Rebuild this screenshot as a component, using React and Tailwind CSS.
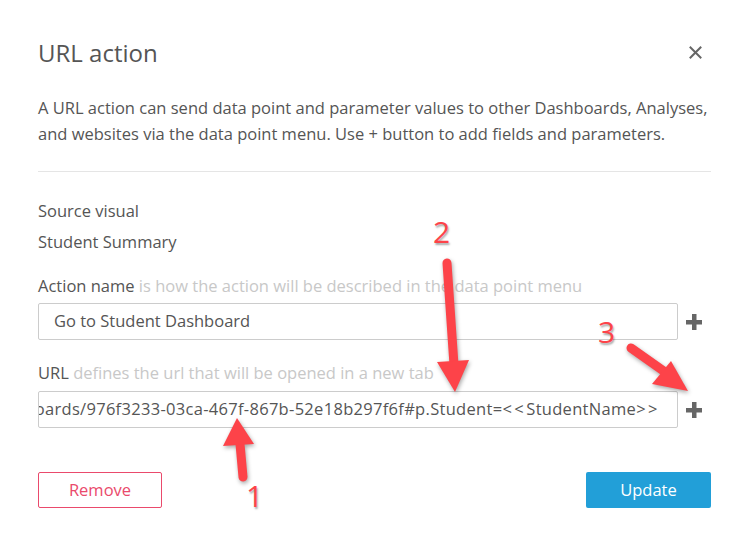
import React from 'react';

const font = { fontFamily: '"Open Sans", "Noto Sans", sans-serif' };

function PlusIcon() {
  return (
    <svg width="18" height="18" viewBox="0 0 18 18" className="shrink-0">
      <rect x="7" y="1" width="4.5" height="16" fill="#666" />
      <rect x="1" y="7" width="16" height="4.5" fill="#666" />
    </svg>
  );
}

function CloseIcon() {
  return (
    <svg width="13" height="13" viewBox="0 0 13 13" className="mr-[9px] mt-[9px] shrink-0">
      <path d="M1.5 1.5 L11.5 11.5 M11.5 1.5 L1.5 11.5" stroke="#666" strokeWidth="2" strokeLinecap="square" />
    </svg>
  );
}

function Annotations() {
  const shadow = { ...font, textShadow: '1px 2px 2px rgba(0,0,0,0.35)' };
  return (
    <div className="pointer-events-none absolute inset-0">
      <svg width="746" height="538" className="absolute left-0 top-0" style={{ filter: 'drop-shadow(1px 2px 2px rgba(0,0,0,0.35))' }}>
        {/* arrow 2 */}
        <line x1="447" y1="263" x2="454" y2="365" stroke="#fd4349" strokeWidth="9" strokeLinecap="round" />
        <polygon points="437,362 469,360 455,392" fill="#fd4349" />
        {/* arrow 3 */}
        <line x1="631" y1="348" x2="665" y2="372" stroke="#fd4349" strokeWidth="9" strokeLinecap="round" />
        <polygon points="671,361 652,384 688,391" fill="#fd4349" />
        {/* arrow 1 */}
        <line x1="243" y1="477" x2="240" y2="444" stroke="#fd4349" strokeWidth="9" strokeLinecap="round" />
        <polygon points="223,446 254,444 237,418" fill="#fd4349" />
      </svg>
      <div className="absolute left-[433px] top-[214px] text-[30px] leading-[36px] text-[#fd4349]" style={shadow}>2</div>
      <div className="absolute left-[598px] top-[314px] text-[30px] leading-[36px] text-[#fd4349]" style={shadow}>3</div>
      <div className="absolute left-[246px] top-[478px] text-[30px] leading-[36px] text-[#fd4349]" style={shadow}>1</div>
    </div>
  );
}

export default function App() {
  return (
    <div className="relative h-[538px] w-[746px] overflow-hidden bg-white text-[#555]" style={font}>
      <div className="flex flex-col pl-[38px] pr-[35px] pt-[37px]">
        <div className="flex items-start justify-between">
          <h2 className="text-[24px] font-normal leading-[32px] text-[#555]">URL action</h2>
          <CloseIcon />
        </div>
        <p className="mt-[26px] text-[16.5px] leading-[26px]">
          A URL action can send data point and parameter values to other Dashboards, Analyses, and websites via the data point menu. Use + button to add fields and parameters.
        </p>
        <div className="mt-[24px] h-px bg-[#e5e5e5]" />
        <div className="mt-[26px] text-[16.5px] leading-[26px]">Source visual</div>
        <div className="mt-[5px] text-[16.5px] leading-[26px]">Student Summary</div>
        <div className="mt-[18px] text-[16.5px] leading-[26px]">
          Action name <span className="text-[#c8c8c8]">is how the action will be described in the data point menu</span>
        </div>
        <div className="mt-[4px] flex items-center gap-[7px]">
          <div className="flex h-[37px] w-[640px] items-center rounded-[2px] border border-[#cccccc] px-[15px] text-[16.5px]">
            Go to Student Dashboard
          </div>
          <PlusIcon />
        </div>
        <div className="mt-[20px] text-[16.5px] leading-[26px]">
          URL <span className="text-[#c8c8c8]">defines the url that will be opened in a new tab</span>
        </div>
        <div className="mt-[5px] flex items-center gap-[7px]">
          <div className="flex h-[37px] w-[640px] items-center justify-end overflow-hidden whitespace-nowrap rounded-[2px] border border-[#cccccc] pr-[17px] text-[16.5px] tracking-[0.3px]">
            https://us-east-1.quicksight.aws.amazon.com/sn/dashboards/976f3233-03ca-467f-867b-52e18b297f6f#p.Student=<span className="tracking-[2.5px]">&lt;&lt;</span>StudentName<span className="tracking-[2.5px]">&gt;&gt;</span>
          </div>
          <PlusIcon />
        </div>
        <div className="mt-[44px] flex items-center justify-between">
          <button className="h-[36px] w-[124px] rounded-[2px] border border-[#ea4a6c] bg-white text-[16.5px] text-[#ea4a6c]">Remove</button>
          <button className="h-[36px] w-[125px] rounded-[2px] bg-[#229fd8] text-[16.5px] text-white">Update</button>
        </div>
      </div>
      <Annotations />
    </div>
  );
}
